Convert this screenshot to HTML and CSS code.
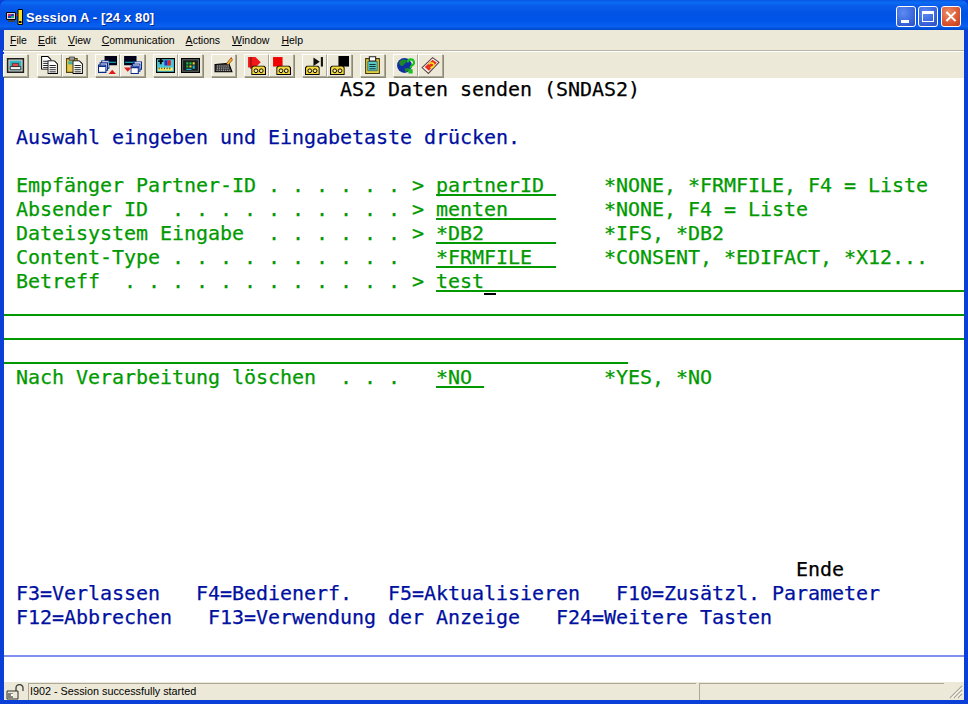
FILE: index.html
```html
<!DOCTYPE html>
<html lang="de">
<head>
<meta charset="utf-8">
<title>Session A - [24 x 80]</title>
<link rel="stylesheet" href="styles.css">
</head>
<body>
<svg class="defs" width="0" height="0" aria-hidden="true">
  <symbol id="tape" viewBox="0 0 14 9">
    <path d="M2 .5h10l1.500 1.500v6.500H.5V2z" fill="#f5d93c" stroke="#000"/>
    <circle cx="4.500" cy="5" r="1.800" fill="#f5e9a0" stroke="#000" stroke-width=".9"/>
    <circle cx="9.500" cy="5" r="1.800" fill="#f5e9a0" stroke="#000" stroke-width=".9"/>
  </symbol>
  <symbol id="page" viewBox="0 0 10 13">
    <path d="M.5.5h6l3 3v9h-9z" fill="#fff" stroke="#000"/>
    <path d="M2 5h6M2 7h6M2 9h6M2 11h6" stroke="#000" stroke-width=".8"/>
  </symbol>
  <symbol id="winstack" viewBox="0 0 11 12">
    <path d="M3.500.5h7v7h-7z" fill="#fff" stroke="#0a2a8c"/>
    <path d="M2 2.500h7v7H2z" fill="#fff" stroke="#0a2a8c"/>
    <path d="M.5 4.500h7v7h-7z" fill="#fff" stroke="#0a2a8c"/>
    <path d="M.5 5h7v1.500h-7z" fill="#0a2a8c"/>
  </symbol>
  <symbol id="mon" viewBox="0 0 12 9">
    <path d="M0 0h12v9H0z" fill="#000018"/>
    <path d="M1 5.500h10v1H1z" fill="#18c8d8"/>
  </symbol>
</svg>

<div class="window">
  <header class="titlebar">
    <svg class="appicon" viewBox="0 0 17 16">
      <path d="M.5 3.500h9v7h-9z" fill="#d8d8d8" stroke="#000"/>
      <path d="M2 5h6v4H2z" fill="#2040c0"/>
      <path d="M2 5h3v2H2z" fill="#e02060"/>
      <path d="M5 7h3v2H5z" fill="#20b060"/>
      <path d="M2 11h7v2H2z" fill="#404040"/>
      <path d="M10 6l2-2v4z" fill="#e02020"/>
      <path d="M12 .5h4.500v15H12z" fill="#f8e020" stroke="#000"/>
      <path d="M13 12h2.500v2H13z" fill="#000"/>
    </svg>
    <span class="titletext">Session A - [24 x 80]</span>
    <div class="wincontrols">
      <span class="wbtn"><span class="glyph-min"></span></span>
      <span class="wbtn"><span class="glyph-max"></span></span>
      <span class="wbtn close">
        <svg viewBox="0 0 21 21" class="glyph-x"><path d="M6 6l9 9M15 6l-9 9" stroke="#fff" stroke-width="2.400" stroke-linecap="square"/></svg>
      </span>
    </div>
  </header>

  <div class="client">
    <nav class="menubar">
      <span class="mi m-file"><u>F</u>ile</span>
      <span class="mi m-edit"><u>E</u>dit</span>
      <span class="mi m-view"><u>V</u>iew</span>
      <span class="mi m-comm"><u>C</u>ommunication</span>
      <span class="mi m-act"><u>A</u>ctions</span>
      <span class="mi m-win"><u>W</u>indow</span>
      <span class="mi m-help"><u>H</u>elp</span>
    </nav>

    <div class="toolbar">
      <div class="tgroup first">
        <span class="tb"><svg viewBox="0 0 18 18"><path d="M1.500 2.500h15v13h-15z" fill="#c8c8c0" stroke="#202020" stroke-width="1.400"/><path d="M3.500 4.500h11v9h-11z" fill="#28b8c8"/><path d="M6 7h6v3H6z" fill="#e8484c" stroke="#402020" stroke-width=".6"/><path d="M4 10h10v3H4z" fill="#f4f4f0" stroke="#202020" stroke-width=".8"/></svg></span>
      </div>
      <div class="tgroup">
        <span class="tb"><svg viewBox="0 0 18 18"><use href="#page" x="1" y="0" width="10" height="13"/><use href="#page" x="7" y="4" width="10" height="13"/></svg></span>
        <span class="tb"><svg viewBox="0 0 18 18"><path d="M1.500 2.500h10v13h-10z" fill="#e8c848" stroke="#504010"/><path d="M4 1h5v3H4z" fill="#a0a0a0" stroke="#303030" stroke-width=".7"/><path d="M3 5h7v3H3z" fill="#48b0a0"/><use href="#page" x="7" y="4" width="10" height="13"/></svg></span>
      </div>
      <div class="tgroup">
        <span class="tb"><svg viewBox="0 0 18 18"><use href="#mon" x="6" y="0" width="12" height="9"/><use href="#winstack" x="0" y="4" width="11" height="12"/><path d="M10 17l3.500-4 3.500 4z" fill="#e01818"/></svg></span>
        <span class="tb"><svg viewBox="0 0 18 18"><use href="#mon" x="1" y="0" width="12" height="9"/><use href="#winstack" x="7" y="5" width="11" height="12"/><path d="M1 11l3.500 4L8 11z" fill="#e01818"/></svg></span>
      </div>
      <div class="tgroup">
        <span class="tb"><svg viewBox="0 0 18 18"><path d="M.5 2.500h17v13H.5z" fill="#48c8d8" stroke="#000"/><path d="M2 4h5v1.800H2zM3.600 2.800h1.800v5H3.600z" fill="#000"/><path d="M8 4h3v5H8z" fill="#2030c0"/><path d="M11 4h3v5h-3z" fill="#e02020"/><path d="M2 11h14v3H2z" fill="#f8e868"/><path d="M3 11v1.500M5.500 11v1.500M8 11v1.500M10.500 11v1.500M13 11v1.500" stroke="#000" stroke-width=".7"/></svg></span>
        <span class="tb"><svg viewBox="0 0 18 18"><path d="M.5 2.500h17v13H.5z" fill="#101818" stroke="#000"/><path d="M1.500 3.500h15v11h-15z" fill="#182020" stroke="#606860"/><path d="M5 6h2v2H5zM5 9h2v2H5zM8 6h2v2H8z" fill="#20c040"/><path d="M8 9h2v2H8zM11 6h2v2h-2z" fill="#e8d820"/><path d="M11 9h2v3h-2zM5 12h5v1.200H5z" fill="#18b0d0"/></svg></span>
      </div>
      <div class="tgroup">
        <span class="tb"><svg viewBox="0 0 18 18"><path d="M1 8l13-1 3 8H1z" fill="#383838" stroke="#000"/><path d="M3 9.500h11M2.800 11.500h12M2.500 13.500h13" stroke="#d8d8d8" stroke-width=".9" stroke-dasharray="1 1"/><path d="M12 7l4-5 1.500 1.500-4 5z" fill="#f0c020" stroke="#803010" stroke-width=".7"/><path d="M15.500 2.500l1-1.500 1 1.500z" fill="#e03030"/></svg></span>
      </div>
      <div class="tgroup">
        <span class="tb"><svg viewBox="0 0 18 18"><path d="M1 1h7l5 5-5 5H1z" fill="#f01818"/><path d="M3 1h1.500v11H3z" fill="#a01010"/><use href="#tape" x="4" y="9" width="14" height="9"/></svg></span>
        <span class="tb"><svg viewBox="0 0 18 18"><path d="M1 1h9v9H1z" fill="#f00000"/><use href="#tape" x="4" y="9" width="14" height="9"/></svg></span>
      </div>
      <div class="tgroup">
        <span class="tb"><svg viewBox="0 0 18 18"><path d="M8 1.500l6 4-6 4z" fill="#101010"/><path d="M15 1h2v9h-2z" fill="#101010"/><use href="#tape" x="0" y="9" width="14" height="9"/></svg></span>
        <span class="tb"><svg viewBox="0 0 18 18"><path d="M8 0h10v10H8z" fill="#000"/><use href="#tape" x="0" y="9" width="14" height="9"/></svg></span>
      </div>
      <div class="tgroup">
        <span class="tb"><svg viewBox="0 0 18 18"><path d="M2.500 2.500h13v14h-13z" fill="#e8d040" stroke="#403810"/><path d="M4.500 5h9v9h-9z" fill="#58c8c8" stroke="#204848" stroke-width=".6"/><path d="M6 .8h6v4H6z" fill="#fff" stroke="#202020"/><path d="M6 8h6M6 10h6M6 12h6" stroke="#103838"/></svg></span>
      </div>
      <div class="tgroup">
        <span class="tb"><svg viewBox="0 0 18 18"><circle cx="8" cy="9" r="7" fill="#1030a0"/><path d="M3 6c2-3 5-3 7-2 0 3-2 3-3 5-2 1-4 0-4-3zM8 12c2-1 4-1 5 0-1 2-3 3-4 3z" fill="#208828"/><path d="M11 6a3 3 0 1 1 4 3c-1 .6-1.200 1-1.200 2.500M12.800 13.500h2v2h-2z" fill="none" stroke="#18c020" stroke-width="2"/></svg></span>
        <span class="tb"><svg viewBox="0 0 18 18"><path d="M1 11L11 1.500l6 4.500L7 16.500z" fill="#f4f4f0" stroke="#604040"/><path d="M3.500 10.500L11 3.500l4 3-7.500 7.500z" fill="#e83020"/><path d="M7.500 8a2.500 2 0 1 1 3 2.500L9 11.500" fill="none" stroke="#f8e020" stroke-width="1.500"/></svg></span>
      </div>
    </div>

    <main class="screen">
<div class="row black">                            AS2 Daten senden (SNDAS2)</div>
<div class="row"></div>
<div class="row blue"> Auswahl eingeben und Eingabetaste drücken.</div>
<div class="row"></div>
<div class="row green"> Empfänger Partner-ID . . . . . . &gt; <span class="fld">partnerID </span>    *NONE, *FRMFILE, F4 = Liste</div>
<div class="row green"> Absender ID  . . . . . . . . . . &gt; <span class="fld">menten    </span>    *NONE, F4 = Liste</div>
<div class="row green"> Dateisystem Eingabe  . . . . . . &gt; <span class="fld">*DB2      </span>    *IFS, *DB2</div>
<div class="row green"> Content-Type . . . . . . . . . .   <span class="fld">*FRMFILE  </span>    *CONSENT, *EDIFACT, *X12...</div>
<div class="row green"> Betreff  . . . . . . . . . . . . &gt; <span class="fld">test<span class="cursor"> </span>                                       </span></div>
<div class="row green"><span class="fld">                                                                                </span></div>
<div class="row green"><span class="fld">                                                                                </span></div>
<div class="row green"><span class="fld">                                                    </span></div>
<div class="row green"> Nach Verarbeitung löschen  . . .   <span class="fld">*NO </span>          *YES, *NO</div>
<div class="row"></div>
<div class="row"></div>
<div class="row"></div>
<div class="row"></div>
<div class="row"></div>
<div class="row"></div>
<div class="row"></div>
<div class="row black">                                                                  Ende</div>
<div class="row blue"> F3=Verlassen   F4=Bedienerf.   F5=Aktualisieren   F10=Zusätzl. Parameter</div>
<div class="row blue"> F12=Abbrechen   F13=Verwendung der Anzeige   F24=Weitere Tasten</div>
<div class="row"></div>
      <div class="oia"></div>
    </main>

    <footer class="statusbar">
      <svg class="lock" viewBox="0 0 20 16"><path d="M11 8V4a3.500 3.500 0 0 1 7 0v3" fill="none" stroke="#404040" stroke-width="1.300"/><path d="M2 7h11v8H2z" fill="#ece9d8" stroke="#303030"/><path d="M2 9h6v5H2z" fill="#808078"/><circle cx="7" cy="11" r="1.200" fill="#fff"/></svg>
      <span class="sfield main">I902 - Session successfully started</span>
      <span class="sfield second"></span>
      <svg class="grip" viewBox="0 0 20 20"><path d="M18 6L6 18M18 10l-8 8M18 14l-4 4" stroke="#aca899" stroke-width="1.200"/><path d="M18 7.500L7.500 18M18 11.500L11.500 18M18 15.500L15.500 18" stroke="#fff" stroke-width="1"/></svg>
    </footer>
  </div>
</div>
</body>
</html>
```

FILE: styles.css
```css
html, body {
  margin: 0;
  padding: 0;
  background: #0a3fd8;
}

.defs {
  position: absolute;
}

.window {
  width: 968px;
  height: 704px;
  display: flex;
  flex-direction: column;
  overflow: hidden;
  background: #0a3fd8;
}

.titlebar {
  height: 30px;
  flex: none;
  display: flex;
  align-items: center;
  padding: 3px 7px 0 6px;
  box-sizing: border-box;
  border-radius: 7px 7px 0 0;
  background: linear-gradient(180deg, #0a55e0 0%, #0a6cf4 8%, #0a5bea 20%, #0053e4 45%, #0055ea 70%, #0a60f0 88%, #0048c8 100%);
}

.appicon {
  width: 17px;
  height: 16px;
  flex: none;
}

.titletext {
  margin: 1px 0 0 3px;
  font: bold 13px "Liberation Sans", Arial, sans-serif;
  letter-spacing: 0.130px;
  color: #fff;
  text-shadow: 1px 1px 0 #0a2a90;
  white-space: nowrap;
}

.wincontrols {
  margin-left: auto;
  display: flex;
  gap: 2px;
}

.wbtn {
  width: 20px;
  height: 21px;
  box-sizing: border-box;
  border: 1px solid #fff;
  border-radius: 3px;
  background: radial-gradient(circle at 35% 30%, #5d8cf2 0%, #3c68de 55%, #2a4cc0 100%);
  display: flex;
  align-items: center;
  justify-content: center;
  position: relative;
}

.wbtn.close {
  margin-left: 1px;
  background: radial-gradient(circle at 35% 30%, #e8906c 0%, #dc5a34 55%, #c03a18 100%);
}

.glyph-min {
  width: 8px;
  height: 3px;
  background: #fff;
  align-self: flex-end;
  margin: 0 3px 3px 0;
}

.glyph-max {
  width: 12px;
  height: 11px;
  box-sizing: border-box;
  border: 1px solid #fff;
  border-top-width: 3px;
}

.glyph-x {
  width: 19px;
  height: 19px;
}

.client {
  flex: 1;
  margin: 0 4px 4px;
  display: flex;
  flex-direction: column;
  background: #ece9d8;
}

.menubar {
  height: 20px;
  flex: none;
  display: flex;
  align-items: center;
  font: 10.500px "Liberation Sans", Arial, sans-serif;
  color: #000;
}

.mi {
  white-space: nowrap;
}

.m-file { margin-left: 6px; }
.m-edit { margin-left: 11px; }
.m-view { margin-left: 12px; }
.m-comm { margin-left: 11px; }
.m-act { margin-left: 11px; }
.m-win { margin-left: 12px; }
.m-help { margin-left: 12px; }

.toolbar {
  height: 28px;
  flex: none;
  box-sizing: border-box;
  border-top: 1px solid #b8b5a4;
  box-shadow: inset 0 1px 0 #fff;
  padding: 3px 0 0 0;
  margin-left: -1px;
  display: flex;
  gap: 8px;
  align-items: flex-start;
}

.tgroup {
  display: flex;
}

.tgroup.first {
  margin-right: 1px;
}

.tb {
  width: 25px;
  height: 23px;
  box-sizing: border-box;
  display: flex;
  align-items: center;
  justify-content: center;
  border: 1px solid;
  border-color: #fff #aca899 #aca899 #fff;
  box-shadow: 1px 1px 0 #8c8974;
  background: #ece9d8;
}

.tb svg {
  width: 19px;
  height: 19px;
  display: block;
}

.screen {
  flex: 1;
  background: #fff;
  font: 20px "DejaVu Sans Mono", "Liberation Mono", monospace;
  letter-spacing: -0.040px;
  -webkit-text-stroke: 0.250px;
  display: flex;
  flex-direction: column;
}

.row {
  height: 24px;
  line-height: 22px;
  white-space: pre;
  flex: none;
}

.green { color: #009a00; }
.blue { color: #0010a0; }
.black { color: #000; }

.fld {
  text-decoration: underline;
  text-decoration-thickness: 2px;
  text-decoration-skip-ink: none;
  text-underline-offset: 2px;
  text-decoration-color: #009a00;
}

.cursor {
  position: relative;
}

.cursor::after {
  content: "";
  position: absolute;
  left: 0;
  width: 12px;
  height: 2px;
  bottom: -2px;
  background: #000;
}

.oia {
  height: 2px;
  margin-top: 1px;
  background: #7f90f0;
  flex: none;
}

.statusbar {
  height: 18px;
  flex: none;
  display: flex;
  align-items: stretch;
  position: relative;
  padding-top: 1px;
  box-sizing: border-box;
}

.lock {
  width: 20px;
  height: 16px;
  margin: 1px 3px 0 1px;
  flex: none;
}

.sfield {
  border-top: 1px solid #aca899;
  border-left: 1px solid #aca899;
  box-sizing: border-box;
  font: 10.800px/15px "Liberation Sans", Arial, sans-serif;
  color: #000;
  padding-left: 1px;
  white-space: nowrap;
}

.sfield.main { width: 668px; }
.sfield.second { width: 245px; margin-left: 3px; }

.grip {
  position: absolute;
  right: 0;
  bottom: 0;
  width: 20px;
  height: 20px;
}
```
